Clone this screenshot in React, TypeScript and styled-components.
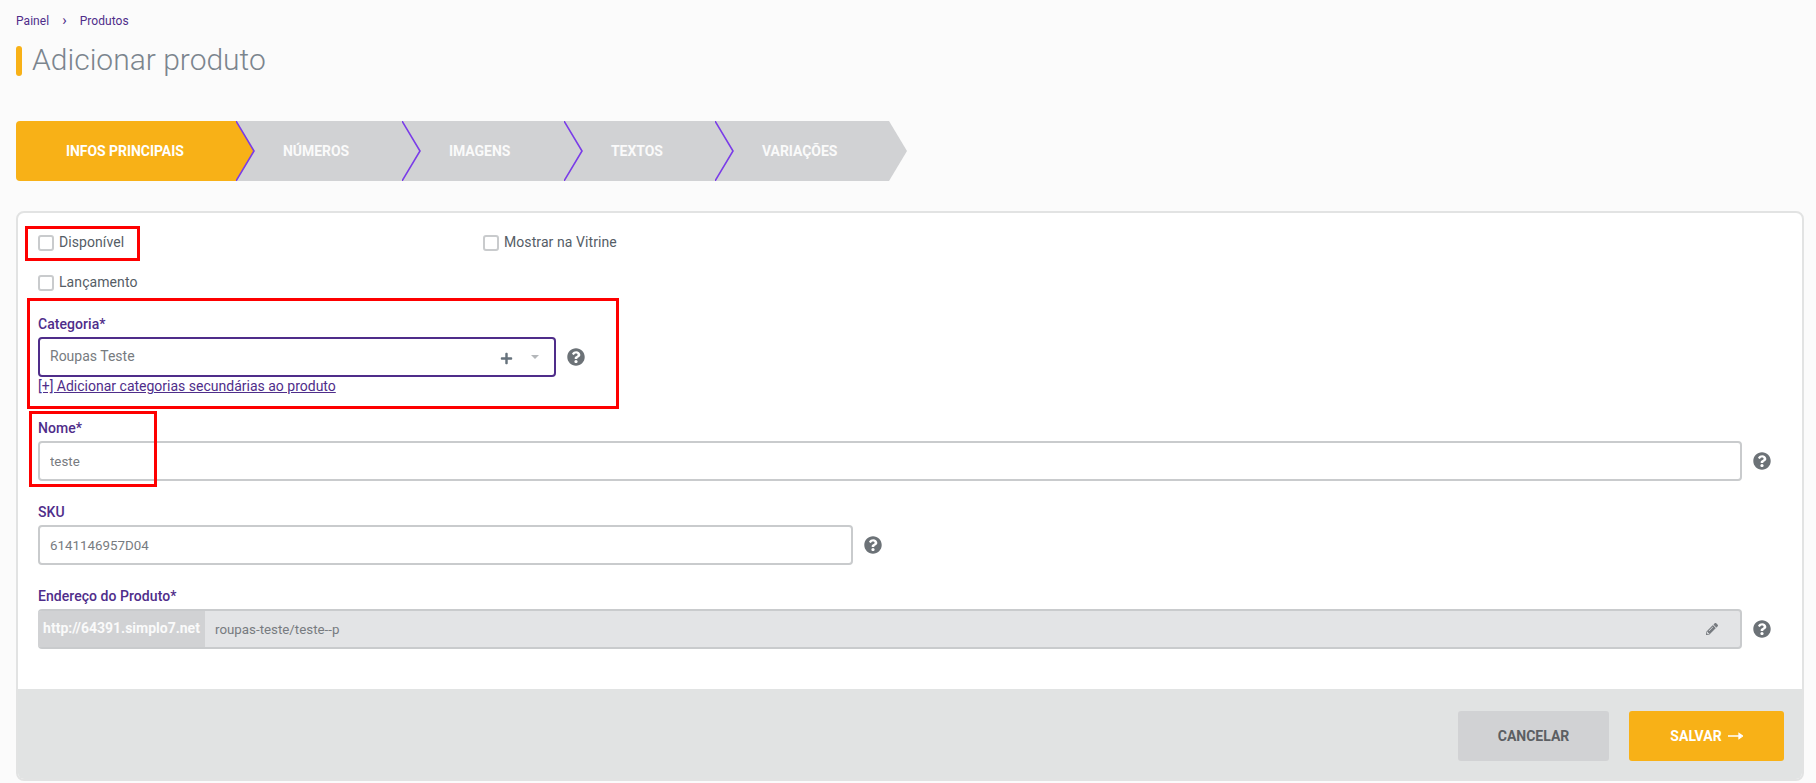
import { ReactElement } from "react";
import styled, { createGlobalStyle } from "styled-components";
import { FaPencilAlt, FaPlus, FaQuestionCircle } from "react-icons/fa";

const GlobalStyle = createGlobalStyle`
  html, body {
    margin: 0;
    padding: 0;
    background: #fbfbfb;
    font-family: Roboto, "Liberation Sans", sans-serif;
  }
  * {
    box-sizing: border-box;
  }
`;

const Page = styled.div`
  position: relative;
  height: 783px;
  padding: 13px 12px 0 16px;
  overflow: hidden;
`;

const Breadcrumb = styled.nav`
  display: flex;
  align-items: center;
  height: 15px;
  font-size: 12px;
  letter-spacing: 0.05px;
  color: #4f2d8a;
`;

const Separator = styled.span`
  margin: 0 13px 0 13px;
  color: #4f2d8a;
  font-size: 15px;
  line-height: 15px;
`;

const Title = styled.h1`
  display: flex;
  align-items: center;
  gap: 10px;
  height: 30px;
  margin: 18px 0 45px;
  font-size: 30px;
  line-height: 28px;
  font-weight: 300;
  color: #7b858e;
  &::before {
    content: "";
    width: 6px;
    height: 30px;
    border-radius: 3px;
    background: #f8b117;
  }
`;

const TitleText = styled.span`
  margin-top: -2px;
`;

const Stepper = styled.div`
  display: flex;
  height: 60px;
  margin-bottom: 30px;
`;

const Step = styled.div<{ $active?: boolean; $width: number }>`
  position: relative;
  display: flex;
  align-items: center;
  width: ${(p) => p.$width}px;
  padding-left: ${(p) => (p.$active ? "50px" : "47px")};
  font-size: 14px;
  font-weight: 700;
  letter-spacing: -0.05px;
  white-space: nowrap;
  color: ${(p) => (p.$active ? "#ffffff" : "#fafafa")};
  background: ${(p) => (p.$active ? "#f8b117" : "#d1d2d4")};
  border-radius: ${(p) => (p.$active ? "4px 0 0 4px" : "0")};
`;

const Tip = styled.svg`
  position: absolute;
  top: 0;
  left: 100%;
  z-index: 1;
  width: 19px;
  height: 60px;
`;

const Card = styled.section`
  display: flex;
  flex-direction: column;
  height: 570px;
  border: 2px solid #e2e3e3;
  border-radius: 8px;
  background: #ffffff;
`;

const Form = styled.div`
  flex: 1;
  display: flex;
  flex-direction: column;
  gap: 23px;
  padding: 22px 31px 0 20px;
`;

const Checks = styled.div`
  display: grid;
  grid-template-columns: 445px 1fr;
  row-gap: 24px;
  margin-bottom: 2px;
`;

const CheckLabel = styled.label`
  display: flex;
  align-items: center;
  gap: 5px;
  height: 16px;
  font-size: 14px;
  letter-spacing: 0.08px;
  line-height: 14px;
  color: #555d66;
`;

const CheckText = styled.span`
  margin-top: -2px;
`;

const CheckBox = styled.input`
  appearance: none;
  width: 16px;
  height: 16px;
  margin: 0;
  border: 2px solid #c9cbcd;
  border-radius: 3px;
  background: #ffffff;
`;

const Field = styled.div<{ $tail?: number }>`
  display: flex;
  flex-direction: column;
  margin-bottom: ${(p) => p.$tail ?? 0}px;
`;

const Label = styled.label`
  height: 17px;
  margin-bottom: 4px;
  font-size: 14px;
  line-height: 17px;
  font-weight: 500;
  letter-spacing: 0.05px;
  color: #4f2d8a;
`;

const Row = styled.div`
  display: flex;
  align-items: center;
  gap: 11px;
`;

const Input = styled.input<{ $width?: number }>`
  flex: ${(p) => (p.$width ? "none" : "1")};
  width: ${(p) => (p.$width ? `${p.$width}px` : "auto")};
  height: 40px;
  padding: 0 10px;
  border: 2px solid #c9cbcd;
  border-radius: 4px;
  outline: none;
  background: #ffffff;
  font-family: inherit;
  font-size: 13.33px;
  color: #777b80;
`;

const Select = styled.div`
  display: flex;
  align-items: center;
  width: 518px;
  height: 40px;
  padding: 0 15px 0 10px;
  border: 2px solid #4f2d8a;
  border-radius: 4px;
  font-size: 14px;
  color: #777b80;
`;

const SelectValue = styled.span`
  flex: 1;
  margin-top: -2px;
`;

const PlusIcon = styled(FaPlus)`
  width: 13px;
  height: 13px;
  margin: 2px 18px 0 0;
  color: #66727c;
`;

const Caret = styled.span`
  width: 0;
  height: 0;
  border-left: 4px solid transparent;
  border-right: 4px solid transparent;
  border-top: 4px solid #b4b7ba;
`;

const HelpIcon = styled(FaQuestionCircle)`
  flex: none;
  width: 18px;
  height: 18px;
  color: #6c7277;
`;

const AddLink = styled.a`
  margin-top: 1px;
  height: 16px;
  font-size: 14px;
  line-height: 16px;
  color: #4f2d8a;
  text-decoration: underline;
`;

const Address = styled.div`
  flex: 1;
  display: flex;
  align-items: center;
  height: 40px;
  border: 2px solid #c9cbcd;
  border-left: 0;
  border-radius: 4px;
  background: #e3e4e6;
  overflow: hidden;
`;

const AddressPrefix = styled.span`
  display: flex;
  align-items: center;
  justify-content: center;
  width: 167px;
  height: 40px;
  margin-top: -2px;
  background: #d1d2d4;
  font-size: 14px;
  font-weight: 700;
  color: #fafafa;
`;

const AddressPath = styled.span`
  flex: 1;
  padding-left: 10px;
  font-size: 13.33px;
  color: #777b80;
`;

const PencilIcon = styled(FaPencilAlt)`
  width: 12px;
  height: 12px;
  margin-right: 22px;
  color: #777b80;
`;

const Footer = styled.footer`
  display: flex;
  justify-content: flex-end;
  gap: 20px;
  height: 90px;
  padding: 22px 18px 0 0;
  background: #e1e3e3;
  border-radius: 0 0 6px 6px;
`;

const Button = styled.button<{ $primary?: boolean }>`
  display: flex;
  align-items: center;
  justify-content: center;
  gap: 6px;
  width: ${(p) => (p.$primary ? "155px" : "151px")};
  height: 50px;
  border: 0;
  border-radius: 3px;
  background: ${(p) => (p.$primary ? "#f8b117" : "#d1d2d4")};
  font-family: inherit;
  font-size: 14px;
  font-weight: 700;
  color: ${(p) => (p.$primary ? "#ffffff" : "#5c5f63")};
`;

const ArrowIcon = styled.svg`
  width: 15px;
  height: 8px;
`;

// marcações vermelhas por cima do print
const Highlight = styled.div<{ $x: number; $y: number; $w: number; $h: number }>`
  position: absolute;
  left: ${(p) => p.$x}px;
  top: ${(p) => p.$y}px;
  width: ${(p) => p.$w}px;
  height: ${(p) => p.$h}px;
  border: 3px solid #fe0000;
  pointer-events: none;
`;

const steps = [
  { label: "INFOS PRINCIPAIS", width: 220 },
  { label: "NÚMEROS", width: 166 },
  { label: "IMAGENS", width: 162 },
  { label: "TEXTOS", width: 151 },
  { label: "VARIAÇÕES", width: 174 },
];

export default function App(): ReactElement {
  return (
    <Page>
      <GlobalStyle />
      <Breadcrumb>
        Painel
        <Separator>›</Separator>
        Produtos
      </Breadcrumb>
      <Title>
        <TitleText>Adicionar produto</TitleText>
      </Title>

      <Stepper>
        {steps.map((step, index) => {
          const active = index === 0;
          const last = index === steps.length - 1;
          return (
            <Step key={step.label} $active={active} $width={step.width}>
              {step.label}
              <Tip viewBox="0 0 19 60">
                <polygon points="0,0 18,30 0,60" fill={active ? "#f8b117" : "#d1d2d4"} />
                {!last && <polyline points="0,0 18,30 0,60" fill="none" stroke="#7a3ce8" strokeWidth="1.6" />}
              </Tip>
            </Step>
          );
        })}
      </Stepper>

      <Card>
        <Form>
          <Checks>
            <CheckLabel>
              <CheckBox type="checkbox" />
              <CheckText>Disponível</CheckText>
            </CheckLabel>
            <CheckLabel>
              <CheckBox type="checkbox" />
              <CheckText>Mostrar na Vitrine</CheckText>
            </CheckLabel>
            <CheckLabel>
              <CheckBox type="checkbox" />
              <CheckText>Lançamento</CheckText>
            </CheckLabel>
          </Checks>

          <Field $tail={3}>
            <Label>Categoria*</Label>
            <Row>
              <Select>
                <SelectValue>Roupas Teste</SelectValue>
                <PlusIcon />
                <Caret />
              </Select>
              <HelpIcon />
            </Row>
            <AddLink href="#">[+] Adicionar categorias secundárias ao produto</AddLink>
          </Field>

          <Field>
            <Label>Nome*</Label>
            <Row>
              <Input defaultValue="teste" />
              <HelpIcon />
            </Row>
          </Field>

          <Field>
            <Label>SKU</Label>
            <Row>
              <Input $width={815} defaultValue="6141146957D04" />
              <HelpIcon />
            </Row>
          </Field>

          <Field>
            <Label>Endereço do Produto*</Label>
            <Row>
              <Address>
                <AddressPrefix>http://64391.simplo7.net</AddressPrefix>
                <AddressPath>roupas-teste/teste--p</AddressPath>
                <PencilIcon />
              </Address>
              <HelpIcon />
            </Row>
          </Field>
        </Form>

        <Footer>
          <Button>CANCELAR</Button>
          <Button $primary>
            SALVAR
            <ArrowIcon viewBox="0 0 15 8">
              <path d="M0 4h13M11 1.5L14.5 4 11 6.5z" stroke="#fff" strokeWidth="1.3" fill="#fff" />
            </ArrowIcon>
          </Button>
        </Footer>
      </Card>

      <Highlight $x={25} $y={226} $w={115} $h={35} />
      <Highlight $x={27} $y={298} $w={592} $h={111} />
      <Highlight $x={29} $y={411} $w={128} $h={76} />
    </Page>
  );
}
